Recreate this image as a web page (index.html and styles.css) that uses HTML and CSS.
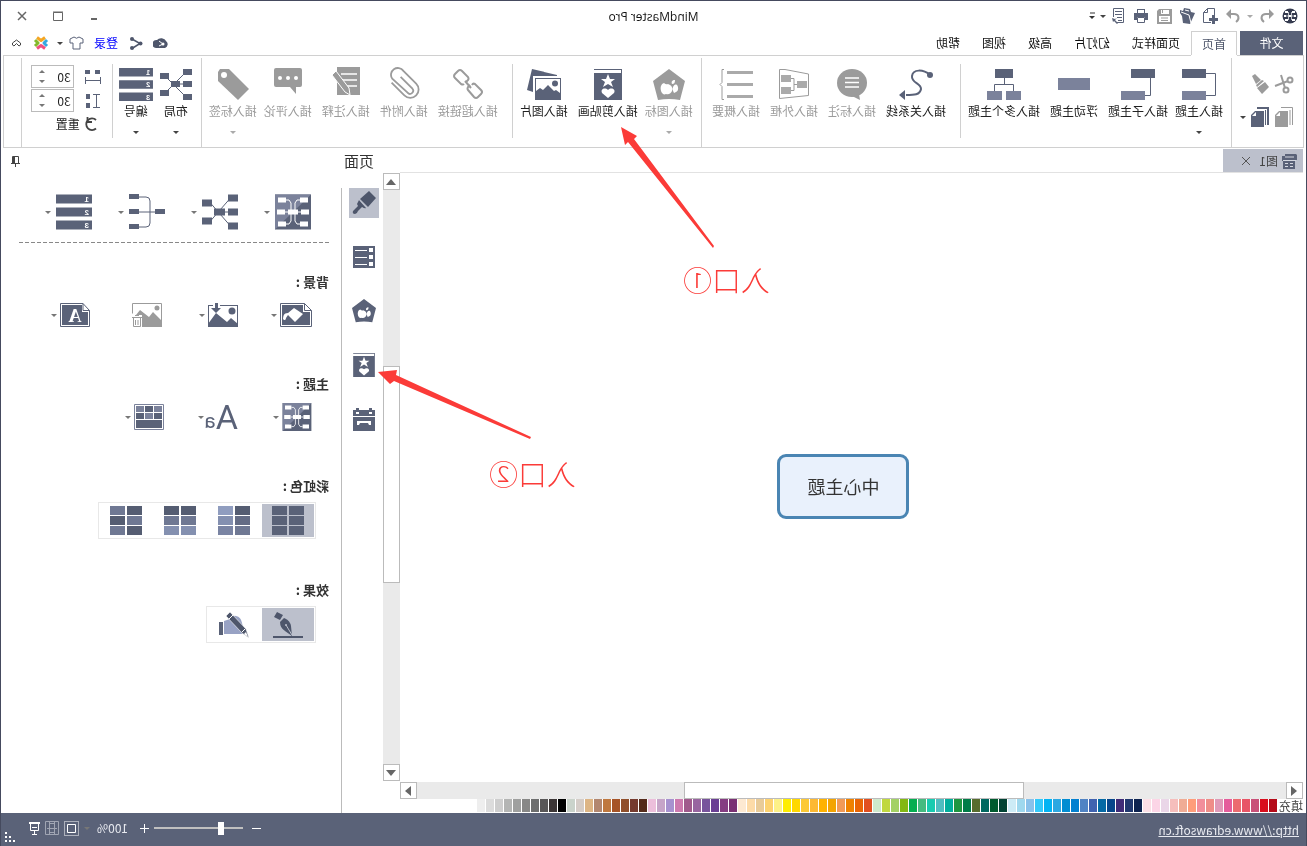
FILE: index.html
```html
<!DOCTYPE html>
<html lang="zh-CN">
<head>
<meta charset="utf-8">
<title>MindMaster Pro</title>
<link rel="stylesheet" href="styles.css">
</head>
<body>
<svg class="defs" aria-hidden="true">
  <defs>
    <symbol id="pentagon" viewBox="0 0 32 32">
      <path fill="currentColor" d="M16 0 32 12 27 31Q16 29 5 31L0 12Z"/>
      <path fill="#fff" d="M17 15q2 1 4-1c3 1 4 4 3 8-1 3-3 4-5 3-3 1-5-1-6-3s0-5 2-6ZM10 11c3 0 4 2 3 4-2 0-3-1-3-4ZM8 16c2-1 3 0 4 2s0 4-1 6l-2-1c-2-1-3-4-1-7Z"/>
    </symbol>
    <symbol id="card" viewBox="0 0 28 31">
      <path fill="currentColor" d="M0 0h28v1H1v3h27v27H0Z"/>
      <path fill="#fff" d="m14 5 2 5h5l-4 3 2 5-5-3-5 3 2-5-4-3h5ZM14 29l-6-5c-2-4 3-6 6-3 3-3 8-1 6 3Z"/>
    </symbol>
    <symbol id="map" viewBox="0 0 36 35">
      <path fill="#5a6278" d="M0 0h36v35H0Z"/>
      <path fill="#7b829b" d="M36 0v35L0 0Z"/>
      <path fill="#fff" d="M3 3h8v5H3ZM2 15h8v5H2ZM3 27h8v5H3ZM25 3h8v5h-8ZM26 15h8v5h-8ZM25 27h8v5h-8ZM13 15h10v5H13Z"/>
      <path fill="none" stroke="#fff" d="M11 5.500h3l2 3v18l-2 3h-3M25 5.500h-3l-2 3v18l2 3h3M10 17.500h16"/>
    </symbol>
    <symbol id="bars" viewBox="0 0 36 35">
      <path fill="#5a6278" d="M0 0h36v9H0ZM0 13h36v9H0ZM0 26h36v9H0Z"/>
      <g fill="#fff" font-size="8" font-weight="700" font-family="Liberation Sans, sans-serif"><text x="3" y="7.500">1</text><text x="3" y="20.500">2</text><text x="3" y="33.500">3</text></g>
    </symbol>
    <symbol id="spider" viewBox="0 0 36 35">
      <path stroke="#5a6278" d="m8 4 20 23M8 31 28 8M5 17.500h17"/>
      <path fill="#5a6278" d="M0 0h10v7H0ZM0 14h10v7H0ZM0 28h10v7H0ZM13 14h11v7H13ZM26 5h10v7H26ZM26 23h10v7H26Z"/>
    </symbol>
  </defs>
</svg>

<div class="window">
  <header class="titlebar">
    <div class="quick">
      <svg width="18" height="18" viewBox="0 0 18 18"><circle cx="9" cy="9" r="7.500" fill="#343a4e"/><path fill="#fff" d="M4 4h3v2H4ZM11 4h3v2h-3ZM3 8h2v2H3ZM13 8h2v2h-2ZM4 12h3v2H4ZM11 12h3v2h-3ZM8 8h2v2H8Z"/><path stroke="#fff" fill="none" stroke-width=".7" d="M7.500 5v8M10.500 5v8M5 9h8"/></svg>
      <button aria-label="撤销"><svg width="18" height="18" viewBox="0 0 18 18"><path fill="none" stroke="#9b9b9b" stroke-width="2" d="M4 7h6c5 0 6 5 2 8"/><path fill="#9b9b9b" d="m2 7 5-5v10Z"/></svg></button>
      <i class="caret pale"></i>
      <button aria-label="重做"><svg width="18" height="18" viewBox="0 0 18 18"><path fill="none" stroke="#9b9b9b" stroke-width="2" d="M14 7H8c-5 0-6 5-2 8"/><path fill="#9b9b9b" d="m16 7-5-5v10Z"/></svg></button>
      <button aria-label="新建"><svg width="18" height="18" viewBox="0 0 18 18"><path fill="none" stroke="#5a6278" d="M8 15.500h7.500V5.500l-4-4h-7V9M11.500 1.500v4h4"/><path fill="#5a6278" d="M4 8h3v3h3v3H7v3H4v-3H1v-3h3Z"/></svg></button>
      <button aria-label="打开"><svg width="18" height="18" viewBox="0 0 18 18"><path fill="#5a6278" d="m1 6 4-1 1-3 6-1 1 3 3-1v3l-2 3-1 7-7 1Z"/><path fill="none" stroke="#fff" d="m5 16 2-8 8-3M7 4l4-1"/></svg></button>
      <button aria-label="保存"><svg width="18" height="18" viewBox="0 0 18 18"><path fill="#9b9b9b" d="M1 2h13l2 2v13H1Z"/><path fill="#fff" d="M4 3h8v4H4ZM3 9h11v6H3Z"/><path stroke="#9b9b9b" d="M10.500 3v3M5 11h7M5 13.500h7"/></svg></button>
      <button aria-label="打印"><svg width="18" height="18" viewBox="0 0 18 18"><path fill="#5a6278" d="M2 6h14v7H2ZM5 2h8v4H5Z"/><path fill="#fff" d="M6 3h6v3H6ZM5 10h8v6H5Z"/><path fill="none" stroke="#5a6278" d="M5.500 10.500h7v5h-7Z"/></svg></button>
      <button aria-label="导出"><svg width="18" height="18" viewBox="0 0 18 18"><path fill="none" stroke="#5a6278" d="M10 15.500H3.500v-14h10V10M5 4.500h7M5 7.500h7M5 10.500h5M5 13.500h4"/><path fill="#5a6278" d="m10 11 2 1 3-1-1 4-1-1-3 3-1-1 3-3Z"/></svg></button>
      <i class="caret tight"></i>
      <svg width="6" height="8" viewBox="0 0 6 8"><path stroke="#333" d="M0 1h5"/><path d="M0 4h6L3 7Z" fill="#333"/></svg>
    </div>
    <h1>MindMaster Pro</h1>
    <div class="winbtns">
      <button aria-label="最小化"><svg width="10" height="10"><path stroke="#666" stroke-width="2" d="M2 8h6"/></svg></button>
      <button aria-label="最大化"><svg width="10" height="10"><path fill="none" stroke="#666" d="M.5 1.500h9v8h-9Z"/><path stroke="#666" d="M0 1h10"/></svg></button>
      <button aria-label="关闭"><svg width="10" height="10"><path stroke="#666" stroke-width="1.500" d="m1 1 8 8M9 1 1 9"/></svg></button>
    </div>
  </header>

  <nav class="tabs">
    <button class="file">文件</button>
    <button class="tab on">首页</button>
    <button class="tab">页面样式</button>
    <button class="tab">幻灯片</button>
    <button class="tab">高级</button>
    <button class="tab">视图</button>
    <button class="tab">帮助</button>
    <div class="account">
      <button aria-label="云"><svg width="16" height="12" viewBox="0 0 16 12"><path fill="#4e566b" d="M4 11a4 4 0 0 1-1-7 5 4 0 0 1 9-1 4 4 0 0 1 1 8Z"/><path fill="none" stroke="#fff" d="m10 4-4 3 4 2"/><circle cx="6" cy="7" r="1.500" fill="#fff"/></svg></button>
      <button aria-label="分享"><svg width="13" height="13" viewBox="0 0 13 13"><path fill="none" stroke="#4e566b" stroke-width="1.500" d="M11 2 3 6.500l8 5"/><g fill="#4e566b"><circle cx="11" cy="2" r="2"/><circle cx="2.500" cy="6.500" r="2"/><circle cx="11" cy="11" r="2"/></g></svg></button>
      <a href="#login">登录</a>
      <button aria-label="皮肤"><svg width="15" height="14" viewBox="0 0 15 14"><path fill="none" stroke="#5a6278" d="M5 1Q7.500 3.500 10 1l4 2v4h-3v6H4V7H1V3Z"/></svg></button>
      <i class="caret"></i>
      <button aria-label="应用"><svg width="16" height="16" viewBox="0 0 16 16"><g fill="none" stroke-width="3" stroke-linejoin="round"><path d="m4 2.500 4 3 4-3" stroke="#f5a623"/><path d="m4 13.500 4-3 4 3" stroke="#f0507e"/><path d="m2 5 3 3-3 3" stroke="#35a8e0"/><path d="m14 5-3 3 3 3" stroke="#84b92c"/></g></svg></button>
      <button class="fold" aria-label="折叠"><svg width="9" height="8" viewBox="0 0 9 8"><path fill="none" stroke="#444" d="m.5 4 4-3 4 3v2L7 7 4.500 4.500 2 7 .5 6Z"/></svg></button>
    </div>
  </nav>

  <section class="ribbon">
    <div class="clip">
      <button aria-label="剪切"><svg width="20" height="20" viewBox="0 0 20 20"><g fill="none" stroke="#9b9b9b" stroke-width="2"><circle cx="4" cy="6" r="2.500"/><circle cx="8" cy="16" r="2.500"/><path d="m6 7 13 5M9 14l4-13"/></g></svg></button>
      <button aria-label="格式刷"><svg width="20" height="20" viewBox="0 0 20 20"><path fill="#9b9b9b" d="m15 0 3 2-4 8-5-4ZM8 6l6 5-1 2-7-6ZM5 8l8 6-5 6-7-7Z"/></svg></button>
      <i></i>
      <button aria-label="复制"><svg width="20" height="20" viewBox="0 0 20 20"><path fill="#9b9b9b" d="M6 4h9l4 4v12H6Z"/><path fill="none" stroke="#9b9b9b" d="M1.500 18V.5H13M4 18V3"/><path fill="#fff" d="M14 5v4h4Z"/></svg></button>
      <button aria-label="粘贴"><svg width="20" height="20" viewBox="0 0 20 20"><path fill="#5a6278" d="M6 4h9l4 4v12H6ZM1 0h12v2H3v16H1ZM4 3h1v15H4Z"/><path fill="#fff" d="M14 5v4h4Z"/></svg></button>
      <i class="caret"></i>
    </div>
    <span class="sep"></span>

    <div class="group near">
      <button class="cmd drop"><svg width="34" height="34" viewBox="0 -2 34 34"><path fill="#5a6278" d="M10 0h24v9H10Z"/><path fill="#7b829b" d="M10 22h24v9H10Z"/><path fill="none" stroke="#5a6278" d="M10 4.500H.5v22H10"/></svg>插入主题<i class="caret"></i></button>
      <button class="cmd"><svg width="34" height="34" viewBox="0 -2 34 34"><path fill="#5a6278" d="M0 0h24v9H0Z"/><path fill="#7b829b" d="M10 22h24v9H10Z"/><path fill="none" stroke="#5a6278" d="M4.500 9v17.500H10"/></svg>插入子主题</button>
      <button class="cmd"><svg width="32" height="34" viewBox="0 -2 32 34"><path fill="#7b829b" d="M0 9h32v12H0Z"/></svg>浮动主题</button>
      <button class="cmd"><svg width="34" height="34" viewBox="0 -2 34 34"><path fill="#5a6278" d="M8 0h18v9H8Z"/><path fill="#7b829b" d="M0 22h15v9H0ZM19 22h15v9H19Z"/><path fill="none" stroke="#5a6278" d="M16.500 9v6M7.500 22v-6.500h19V22"/></svg>插入多个主题</button>
    </div>
    <span class="sep short"></span>
    <div class="group far">
      <button class="cmd"><svg width="34" height="34" viewBox="0 -2 34 34"><path fill="none" stroke="#5a6278" stroke-width="2" d="M3 6C10 0 20 0 21 7c1 7-9 7-9 13 1 6 7 6 15 6"/><circle cx="3" cy="6" r="3" fill="#5a6278"/><path fill="#5a6278" d="m28 21 6 5-6 5Z"/></svg>插入关系线</button>
      <button class="cmd off"><svg width="30" height="34" viewBox="0 -2 30 34"><ellipse cx="15" cy="14" rx="15" ry="14" fill="#9b9b9b"/><path fill="#9b9b9b" d="m8 25-1 6 8-4Z"/><path stroke="#fff" stroke-width="1.500" d="M8 9h14M8 13.500h14M8 18h14"/></svg>插入标注</button>
      <button class="cmd off"><svg width="30" height="34" viewBox="0 -2 30 34"><path fill="none" stroke="#9b9b9b" d="M.5 5 24 .5h5.500v29L.5 26.500ZM12 15.500h3M18 9.500h-3v12h3"/><path fill="#aaa" d="M2 12h10v7H2ZM18 6h10v7H18ZM18 18h10v7H18Z"/></svg>插入外框</button>
      <button class="cmd off"><svg width="34" height="34" viewBox="0 -2 34 34"><path fill="#aaa" d="M0 2h26v3H0ZM0 14h26v3H0ZM0 26h26v3H0Z"/><path fill="none" stroke="#9b9b9b" d="M29 .5h2v13l2 2-2 2v13h-2"/></svg>插入概要</button>
    </div>
    <span class="sep"></span>
    <div class="group near">
      <button class="cmd drop off"><svg class="dim" width="32" height="34"><use href="#pentagon" y="2" width="32" height="32"/></svg>插入图标<i class="caret pale"></i></button>
      <button class="cmd"><svg class="ink" width="28" height="34"><use href="#card" y="2" width="28" height="31"/></svg>插入剪贴画</button>
      <button class="cmd"><svg width="34" height="34" viewBox="0 -2 34 34"><path fill="#5a6278" d="m29 0 5 21-6 2V7H4V6Z"/><path fill="#5a6278" d="M0 9h26v22H0Z"/><path fill="#fff" d="M1 10h24v12l-4-3-3 2-5-5-6 6-2-1-4 3Z"/><circle cx="6" cy="14.500" r="3" fill="#5a6278"/></svg>插入图片</button>
    </div>
    <span class="sep short"></span>
    <div class="group far">
      <button class="cmd off"><svg width="30" height="34" viewBox="0 -2 30 34"><g fill="none" stroke="#9b9b9b" stroke-width="2"><path d="m17 13-2-2q-1-1 0-3l6-6q2-2 4 0l3 3q2 2 0 4l-6 6q-2 1-3 0M13 16l2 2q1 2 0 3l-6 7q-2 2-4 0l-3-3q-2-2 0-4l6-6q2-1 3 1"/><path d="m12 19 6-7"/></g></svg>插入超链接</button>
      <button class="cmd off"><svg width="32" height="34" viewBox="1 0 23 24"><path fill="none" stroke="#9b9b9b" stroke-width="1.300" d="m21.440 11.050-9.190 9.190a6 6 0 0 1-8.490-8.490l9.190-9.190a4 4 0 0 1 8 5.660l-11 10a2 2 0 0 1-3.500-2.830l8.490-8.480"/></svg>插入附件</button>
      <button class="cmd off"><svg width="28" height="34" viewBox="0 0 28 34"><path fill="#9b9b9b" d="M0 0h23v28H0Z"/><path stroke="#fff" stroke-width="1.500" d="M3 7h16M3 13h16M3 19h12"/><path fill="#9b9b9b" stroke="#fff" d="m24 4 4 4-13 17-5 3 1-7Z"/></svg>插入注释</button>
      <button class="cmd off"><svg width="28" height="34" viewBox="0 0 28 34"><path fill="#9b9b9b" d="M2 1h24q2 0 2 2v15q0 2-2 2H12l-6 7v-7H2q-2 0-2-2V3q0-2 2-2Z"/><g fill="#fff"><circle cx="6" cy="11" r="2"/><circle cx="14" cy="11" r="2"/><circle cx="22" cy="11" r="2"/></g></svg>插入评论</button>
      <button class="cmd drop off"><svg width="32" height="34" viewBox="0 -2 32 34"><path fill="#9b9b9b" d="M20 0h9l2 3v9L11 31 0 20Z"/><circle cx="25" cy="6" r="3" fill="#fff"/></svg>插入标签<i class="caret pale"></i></button>
    </div>
    <span class="sep"></span>
    <div class="group arrange">
      <button class="cmd drop"><svg width="32" height="34" viewBox="0 -2 32 34"><path stroke="#5a6278" d="m6 3 22 22M6 28 28 6M6 15h9"/><path fill="#5a6278" d="M0 0h9v6H0ZM0 12h9v6H0ZM0 25h9v6H0ZM12 12h9v6h-9ZM23 4h9v6h-9ZM23 21h9v6h-9Z"/></svg>布局<i class="caret"></i></button>
      <button class="cmd drop"><svg width="34" height="34"><use href="#bars" y="1" width="34" height="33"/></svg>编号<i class="caret"></i></button>
    </div>
    <span class="sep short"></span>
    <div class="spacing">
      <label class="spin"><svg width="18" height="18" viewBox="0 0 18 18"><path fill="#5a6278" d="M2 2h5v4H2ZM12 2h5v4h-5Z"/><path fill="none" stroke="#5a6278" d="M1.500 9v7M16.500 9v7M2 12.500h15"/></svg>
        <span class="box"><input type="text" value="30" aria-label="水平间距"><span class="arrows"><i class="caret up"></i><i class="caret mid"></i></span></span></label>
      <label class="spin"><svg width="18" height="18" viewBox="0 0 18 18"><path fill="#5a6278" d="M12 2h4v5h-4ZM12 11h4v5h-4Z"/><path fill="none" stroke="#5a6278" d="M2 2.500h7M2 15.500h7M5.500 3v13"/></svg>
        <span class="box"><input type="text" value="30" aria-label="垂直间距"><span class="arrows"><i class="caret up"></i><i class="caret mid"></i></span></span></label>
      <button class="reset"><svg width="16" height="16" viewBox="0 0 16 16"><path fill="none" stroke="#444" stroke-width="1.800" d="M4 12.500A5.800 5.800 0 1 0 4 4"/><path fill="none" stroke="#444" stroke-width="1.800" d="M12.500 1v5H8"/></svg>重置</button>
    </div>
    <span class="sep"></span>
  </section>

  <main class="work">
    <div class="editor">
      <div class="doctabs">
        <div class="doc"><svg width="16" height="18" viewBox="0 0 16 18"><path fill="#5a6278" d="M1 2h11v2h3v5h-1v8H2V8H0V3Z"/><path fill="none" stroke="#d5d8e0" d="M3 5h9M1 8.500h13M4 11.500h3M9 11.500h3M4 14.500h3M9 14.500h3"/></svg><span>图1</span><button aria-label="关闭图1"><svg width="8" height="8"><path stroke="#555" d="m0 0 8 8M8 0 0 8"/></svg></button></div>
      </div>
      <div class="canvas"><div class="topic">中心主题</div></div>
      <div class="hbar"><button aria-label="向左"><svg width="6" height="10"><path fill="#666" d="M6 0v10L0 5Z"/></svg></button><span class="track"><span class="thumb"></span></span><button aria-label="向右"><svg width="6" height="10"><path fill="#666" d="M0 0v10l6-5Z"/></svg></button></div>
      <div class="palette" id="palette"><span>填充</span></div>
    </div>
    <div class="vbar"><button aria-label="向上"><svg width="10" height="6"><path fill="#666" d="M0 6h10L5 0Z"/></svg></button><span class="track"><span class="thumb"></span></span><button aria-label="向下"><svg width="10" height="6"><path fill="#666" d="M0 0h10L5 6Z"/></svg></button></div>

    <aside class="panel">
      <div class="paneltitle"><h2>页面</h2><button aria-label="固定"><svg width="9" height="11" viewBox="0 0 9 11"><path fill="none" stroke="#444" d="M1.500 7V.5h6V7M0 7.500h9M4.500 8v3"/><path fill="#444" d="M5 1h2v6H5Z"/></svg></button></div>
      <div class="panelbody">
        <div class="rail">
          <button class="on" aria-label="页面格式"><svg width="24" height="24" viewBox="0 0 24 24"><path fill="#4e566b" d="m7 0 9 8-8 8-8-9ZM17 9l2 4-1 2 5 5q1 3-2 3-2 0-3-3l-4-4q-3 2-4 1Z"/><path stroke="#bcc0cc" d="m17 8-8 9"/></svg></button>
          <button aria-label="列表"><svg width="22" height="22" viewBox="0 0 22 22"><path fill="#5a6278" d="M0 0h22v22H0Z"/><path fill="#fff" d="M2 2h4v4H2ZM2 9h4v4H2ZM2 16h4v4H2ZM8 4h12v1H8ZM8 11h12v1H8ZM8 18h12v1H8Z"/></svg></button>
          <button class="ink" aria-label="图标"><svg width="24" height="24"><use href="#pentagon" width="24" height="24"/></svg></button>
          <button class="ink" aria-label="剪贴画"><svg width="22" height="24"><use href="#card" width="22" height="24"/></svg></button>
          <button aria-label="任务"><svg width="22" height="23" viewBox="0 0 22 23"><path fill="#5a6278" d="M0 2h3V0h3v2h10V0h3v2h3v6H0ZM0 9h22v14H0Z"/><path fill="#fff" d="M3 4h3v2H3ZM16 4h3v2h-3ZM4 13h14v4h-2l-1-2H7l-1 2H4Z"/></svg></button>
        </div>
        <div class="props">
          <div class="layouts">
            <button aria-label="导图"><svg width="36" height="36"><use href="#map" width="36" height="36"/></svg><i class="caret mid"></i></button>
            <button aria-label="布局"><svg width="36" height="36"><use href="#spider" width="36" height="36"/></svg><i class="caret mid"></i></button>
            <button aria-label="连线"><svg width="36" height="36" viewBox="0 0 36 36"><path fill="none" stroke="#5a6278" d="M26 3h-7q-4 0-4 4v22q0 4 4 4h7M10 18h16"/><path fill="#5a6278" d="M0 15h10v5H0ZM26 0h10v5H26ZM26 15h10v5H26ZM26 30h10v5H26Z"/></svg><i class="caret mid"></i></button>
            <button aria-label="编号"><svg width="36" height="36"><use href="#bars" width="36" height="36"/></svg><i class="caret mid"></i></button>
          </div>
          <h3>背景 :</h3>
          <div class="tools">
            <button aria-label="填充背景"><svg width="32" height="24" viewBox="0 0 32 24"><path fill="none" stroke="#5a6278" d="M.5 7.500 7.500.5h24v23H.5ZM7.500.5v7h-7"/><path fill="#5a6278" d="M9 2h21v20H2V9h7Z"/><path fill="#fff" d="m9 11 9-6 6 5c4 0 5 3 5 6-1 2-3 1-3-1l-2-3-7 7Z"/></svg><i class="caret mid"></i></button>
            <button aria-label="背景图片"><svg width="30" height="24" viewBox="0 0 30 24"><path fill="none" stroke="#5a6278" d="M.5 3v20.500h29V3M0 2.500h18M25 2.500h5"/><path fill="#5a6278" d="m0 24 0-3 7-6 4 4 11-9 8 11v3ZM20 0h3v5h4l-5 5-5-5h3Z"/><circle cx="6" cy="8" r="3.500" fill="#5a6278"/></svg><i class="caret mid"></i></button>
            <button aria-label="移除背景"><svg width="32" height="24" viewBox="-2 0 32 24"><path fill="none" stroke="#9b9b9b" d="M.5.5h29v10M.5.500V23"/><path fill="#9b9b9b" d="m0 24 0-6 9-9 4 5 9-7 4 5h-6v12Z"/><circle cx="5" cy="5" r="2.500" fill="#9b9b9b"/><path fill="none" stroke="#9b9b9b" d="M20 14.500h10M23 12.500h4M21.500 15v8.500h7V15M24 17v5M26.500 17v5"/></svg></button>
            <button aria-label="水印"><svg width="30" height="24" viewBox="0 0 30 24"><path fill="none" stroke="#5a6278" d="M.5 7.500 7 .5h22.500v23H.5ZM7 .5v7H.5"/><path fill="#5a6278" d="M8 2h20v20H2V9h6Z"/><text x="15" y="19" fill="#fff" text-anchor="middle" font-family="Liberation Serif, serif" font-weight="700" font-size="18">A</text></svg><i class="caret mid"></i></button>
          </div>
          <h3>主题 :</h3>
          <div class="tools tall">
            <button aria-label="主题"><svg width="30" height="28"><use href="#map" width="30" height="28"/></svg><i class="caret mid"></i></button>
            <button class="fonts" aria-label="主题字体"><span class="big">A</span><span class="small">a</span><i class="caret mid"></i></button>
            <button aria-label="主题颜色"><svg width="30" height="26" viewBox="0 0 30 26"><path fill="none" stroke="#7b829b" d="M.5.500h29v25H.5Z"/><path fill="#5a6278" d="M11 2h8v6h-8ZM2 9h8v6H2ZM20 9h8v6h-8ZM2 16h26v8H2Z"/><path fill="#7b829b" d="M2 2h8v6H2ZM20 2h8v6h-8ZM11 9h8v6h-8Z"/></svg><i class="caret mid"></i></button>
          </div>
          <h3>彩虹色 :</h3>
          <div class="choices">
            <button class="on" aria-label="单色"><svg width="32" height="29"><path fill="#5a6278" d="M0 0h15v9H0ZM17 0h15v9H17ZM0 10h15v9H0ZM17 10h15v9H17ZM0 20h15v9H0ZM17 20h15v9H17Z"/></svg></button>
            <button aria-label="双列"><svg width="32" height="29"><path fill="#555d72" d="M0 0h15v9H0Z"/><path fill="#646c85" d="M0 10h15v9H0Z"/><path fill="#6f7893" d="M0 20h15v9H0Z"/><path fill="#909dbf" d="M17 0h15v9H17Z"/><path fill="#8490b0" d="M17 10h15v9H17Z"/><path fill="#7a84a3" d="M17 20h15v9H17Z"/></svg></button>
            <button aria-label="渐变"><svg width="32" height="29"><path fill="#555d72" d="M0 0h15v9H0ZM17 0h15v9H17Z"/><path fill="#6f7893" d="M0 10h15v9H0ZM17 10h15v9H17Z"/><path fill="#8490b0" d="M0 20h15v9H0ZM17 20h15v9H17Z"/></svg></button>
            <button aria-label="交错"><svg width="32" height="29"><path fill="#555d72" d="M0 0h15v9H0ZM17 10h15v9H17ZM0 20h15v9H0Z"/><path fill="#6f7893" d="M17 0h15v9H17ZM0 10h15v9H0ZM17 20h15v9H17Z"/></svg></button>
          </div>
          <h3>效果 :</h3>
          <div class="choices">
            <button class="on" aria-label="钢笔"><svg width="32" height="26" viewBox="0 0 32 26"><path fill="#4e566b" d="m21 3 6-3 3 5-6 3ZM20 6l4 4q0 6-5 9l-7 5 1-10q1-6 7-8ZM1 24h30v2H1Z"/><path stroke="#bcc0cc" d="m12 23 6-10"/><circle cx="18" cy="13" r="1" fill="#bcc0cc"/></svg></button>
            <button aria-label="手绘"><svg width="32" height="26" viewBox="0 0 32 26"><path fill="#98a2c4" d="M26 9v13H9q-4 0-3-3l2-8q1-6 6-7 3-1 6 3Z"/><path fill="#5a6278" d="M27 10h4v13h-4Z"/><path fill="#4e566b" stroke="#fff" stroke-width=".6" d="m20 0 4 4L8 21l-7 5 3-9Z"/><path stroke="#fff" d="m5 17 3 3M17 3l4 4"/><path fill="#fff" d="m2 25 2-5 2 2Z"/></svg></button>
          </div>
        </div>
      </div>
    </aside>
  </main>

  <footer class="status">
    <a href="http://www.edrawsoft.cn">http://www.edrawsoft.cn</a>
    <div class="zoom">
      <button aria-label="缩小"><svg width="9" height="9"><path stroke="#fff" d="M0 4.500h9"/></svg></button>
      <input type="range" min="0" max="100" value="23" aria-label="缩放">
      <button aria-label="放大"><svg width="9" height="9"><path stroke="#fff" d="M0 4.500h9M4.500 0v9"/></svg></button>
      <span class="pct">100%</span>
      <i class="caret mid"></i>
      <button aria-label="适合页面"><svg width="15" height="15"><path fill="none" stroke="#fff" stroke-dasharray="1 1" d="M.5.500h14v14H.5Z"/><path fill="none" stroke="#fff" d="M3.500 3.500h8v8h-8Z"/></svg></button>
      <button aria-label="适合宽度"><svg width="14" height="14"><path fill="none" stroke="#a0a5b3" d="M.5.500h13v13H.5ZM4.500 1v12M9.500 1v12M2 7.500h10M4 2.500h6M4 11.500h6"/></svg></button>
      <button aria-label="演示"><svg width="11" height="13"><path fill="none" stroke="#fff" d="M1.500 1v7.500h8V1M3 5.500h5M5.500 9v3M3 12.500h5"/><path fill="#fff" d="M0 0h11v2H0Z"/></svg></button>
      <svg class="grip" width="11" height="11"><path fill="#fff" d="M8 0h2v2H8ZM4 4h2v2H4ZM8 4h2v2H8ZM0 8h2v2H0ZM4 8h2v2H4ZM8 8h2v2H8Z"/></svg>
    </div>
  </footer>

  <svg class="note arrow1" width="95" height="123" viewBox="0 0 95 123"><path fill="#fb3b38" d="M94 1 90 19 87 16 2 122 1 120 81 13 78 10Z"/></svg>
  <p class="note text1">入口①</p>
  <svg class="note arrow2" width="155" height="74" viewBox="0 0 155 74"><path fill="#fb3b38" d="M154 6 142 18 138 15 2 73 1 71 136 9 135 4Z"/></svg>
  <p class="note text2">入口②</p>
</div>
<script src="script.js"></script>
</body>
</html>
```
FILE: styles.css
```css
* { box-sizing: border-box; }
body { margin: 0; background: #fff; color: #222; font: 12px/16px "Noto Sans CJK SC", sans-serif; }
button { border: 0; background: none; padding: 0; margin: 0; font: inherit; color: inherit; display: flex; align-items: center; justify-content: center; }
svg { display: block; flex: none; }
h1, h2, h3, p { margin: 0; font-weight: 400; }
.defs { position: absolute; width: 0; height: 0; }

/* the whole interface is shown flipped left to right */
.window { position: relative; display: flex; flex-direction: column; min-height: 100vh; border: 1px solid #454a5e; border-bottom: 0; transform: scaleX(-1); }

.caret { width: 0; height: 0; border: 3px solid transparent; border-top-color: #444; border-bottom: 0; flex: none; }
.caret.up { border-top: 0; border-bottom: 3px solid #777; }
.caret.pale { border-top-color: #aaa; }
.caret.mid { border-top-color: #777; }
.ink { color: #5a6278; }
.dim { color: #9b9b9b; }

.titlebar { display: grid; grid-template-columns: 1fr auto 1fr; align-items: center; height: 30px; }
.quick { display: flex; align-items: center; gap: 5px; padding-left: 7px; }
.quick .tight { margin-left: -2px; }
h1 { font: 12px/16px "Open Sans", sans-serif; color: #111; padding: 2px 0 0; }
.winbtns { display: flex; justify-content: flex-end; gap: 26px; padding-right: 16px; }

.tabs { display: flex; height: 24px; padding-left: 3px; color: #111; }
.file { width: 63px; margin-right: 3px; background: #5a6278; color: #fff; }
.tab { padding: 0 11px; }
.tab.on { position: relative; padding: 0 10px; border: 1px solid #d0d0d0; border-bottom: 0; background: #fff; color: #4e566b; box-shadow: 0 1px #fff; z-index: 1; }
.account { display: flex; align-items: center; gap: 10px; margin-left: auto; padding-right: 11px; }
.account a { color: #00f; text-decoration: none; margin-left: 2px; }
.account .caret { margin: 0 -2px 0 -4px; }
.fold { margin-left: 2px; }

.ribbon { display: flex; min-height: 93px; margin: 0 2px; border: 1px solid #d0d0d0; }
.sep { width: 1px; flex: none; margin-top: 2px; background: #d0d0d0; }
.sep.short { margin: 8px 0 9px; }
.clip { display: grid; grid-template-columns: 20px 20px 6px; grid-template-rows: 20px 20px; align-items: center; gap: 13px 4px; padding: 18px 8px 0 9px; }
.group { display: flex; }
.near { padding: 0 2px 0 6px; }
.far { padding: 0 5px 0 9px; }
.arrange { gap: 3px; padding: 0 4px 0 7px; }
.cmd { flex-direction: column; justify-content: flex-start; padding: 11px 5px 0; white-space: nowrap; }
.cmd.drop { padding: 11px 2px 0; }
.cmd svg { margin-bottom: 2px; }
.cmd .caret { margin-top: 12px; }
.off { color: #9b9b9b; }
.spacing { display: flex; flex-direction: column; gap: 1px; padding: 9px 9px 0 10px; }
.spin { display: flex; align-items: center; gap: 10px; }
.box { display: flex; width: 43px; height: 23px; border: 1px solid #bbb; }
.box input { width: 28px; border: 0; padding: 0 2px; font: inherit; color: #222; background: none; outline: 0; }
.arrows { display: flex; flex-direction: column; justify-content: center; gap: 7px; }
.reset { gap: 4px; align-self: flex-start; margin-top: 3px; padding-left: 2px; }

.work { display: flex; flex: 1; }
.editor { display: flex; flex-direction: column; flex: 1; min-width: 0; padding-left: 3px; }
.doctabs { height: 25px; padding-top: 1px; border-bottom: 1px solid #e2e2e2; }
.doc { display: flex; align-items: center; width: 80px; height: 23px; gap: 3px; padding-left: 6px; background: #bcc0cc; color: #444; }
.doc button { margin-left: 6px; }
.canvas { display: grid; flex: 1; place-items: center; padding: 17px 0 0 16px; }
.topic { padding: 17px 27px; border: 3px solid #4a85b3; border-radius: 9px; background: #e9f1fc; color: #333; font-size: 18px; line-height: 25px; }
.hbar { display: flex; height: 17px; }
.hbar button, .vbar button { width: 17px; height: 17px; border: 1px solid #bbb; background: #fff; flex: none; }
.track { display: flex; flex: 1; background: #eaeaea; }
.thumb { border: 1px solid #bbb; background: #fff; }
.hbar .track { padding-left: 29%; }
.hbar .thumb { width: 56%; }
.palette { display: flex; gap: 1px; height: 14px; color: #444; }
.palette span { line-height: 14px; margin-right: 1px; }
.swatch { width: 8px; height: 13px; }
.vbar { display: flex; flex-direction: column; width: 17px; margin: 25px 0 32px; }
.vbar .track { padding-top: 176px; }
.vbar .thumb { width: 100%; height: 217px; }

.panel { display: flex; flex-direction: column; width: 382px; }
.paneltitle { display: flex; align-items: center; justify-content: space-between; height: 40px; padding: 0 10px 14px 9px; }
h2 { font-size: 15px; color: #333; }
.panelbody { display: flex; flex: 1; }
.rail { display: flex; flex: none; flex-direction: column; gap: 24px; width: 41px; padding-left: 4px; }
.rail button { width: 30px; height: 30px; }
.rail .on, .choices .on { background: #bcc0cc; }
.props { flex: 1; min-width: 0; padding: 6px 18px 0 12px; border-left: 1px solid #bbb; }
.layouts { display: grid; grid-template-columns: repeat(4, 73px); height: 49px; padding-left: 18px; background: repeating-linear-gradient(90deg, #888 0 4px, transparent 4px 6px) bottom / 100% 1px no-repeat; }
.layouts button, .tools button { justify-content: flex-start; gap: 5px; }
.layouts button { height: 36px; }
h3 { margin-top: 30px; font-size: 13px; line-height: 18px; font-weight: 700; color: #333; }
.tools { display: grid; grid-template-columns: repeat(4, 74px); height: 26px; margin: 11px 0 0 17px; align-items: center; }
.tools button { gap: 3px; }
.tools + h3 { margin-top: 47px; }
.tools.tall { height: 28px; margin-top: 10px; }
.tools.tall + h3 { margin-top: 46px; }
.fonts { height: 28px; color: #5a6278; font-family: Roboto, sans-serif; }
.tools .fonts { gap: 0; }
.big { font-size: 34px; line-height: 28px; }
.small { font-size: 21px; line-height: 20px; align-self: flex-end; }
.choices { display: inline-flex; gap: 2px; margin: 7px 0 0 13px; padding: 1px; border: 1px solid #e8e8e8; vertical-align: top; }
.choices button { width: 52px; height: 33px; }
.choices + h3 { margin-top: 42px; }

.status { display: flex; align-items: center; justify-content: space-between; height: 33px; padding: 0 3px 0 7px; background: #5a6278; color: #e8eaf0; }
.status a { color: inherit; }
.zoom { display: flex; align-items: center; gap: 5px; height: 100%; padding-bottom: 3px; }
.zoom input { appearance: none; width: 89px; height: 13px; margin: 0 0 0 4px; background: linear-gradient(#c0c0c0, #c0c0c0) center / 100% 2px no-repeat; }
.zoom input::-webkit-slider-thumb { appearance: none; width: 6px; height: 13px; background: #fff; }
.pct { margin: 0 2px 0 7px; }
.grip { align-self: flex-end; margin-left: 9px; }

.note { position: absolute; pointer-events: none; color: #fb3b38; font-size: 29px; font-weight: 300; line-height: 36px; white-space: nowrap; }
.arrow1 { left: 591px; top: 125px; }
.arrow2 { left: 774px; top: 365px; }
.text1 { left: 536px; top: 260px; }
.text2 { left: 730px; top: 454px; }
```
FILE: script.js
```javascript
const colors = `b40a18 d90d1c c95078 e85566 ec6b70 e55d9b e09ab8 ef8d88 f28e9b ff9d7a f0ac95 f6bebc ead6e8 fcd5e6 fcdfe6
0e2350 21386f 402c78 07468b 0469a5 4062b0 5083c4 0280d0 028dd2 2ca8e2 02b3f3 34c9fa 8ac1ea 9fd8ee cdebf6
004233 005a2e 006860 586d2e 007c48 1e9641 02ae9d 50bdc0 18cbb0 45bb80 04ae50 83b813 a3d165 c0d840 cee8cc
e24f20 ea6505 ef8200 f19a58 f3a402 ffb200 fdb933 fcc935 ffd800 feed00 fdf187 fdd270 e9cb98 fddba8 fde9d2
7a3073 853c82 6a3f94 78549c 9865a0 a05a8c cd7aaf a792cf c6a5c8 ecbfdb
542b1b 753a2e 904f2b a65427 bf783f b28770 ddb585 d5cdc8 cad3cb
000000 3b3535 585657 6d6e6e 888887 9fa09f b4b5b4 cecece dcdcdc eeeeee`.split(/\s+/);
const palette = document.getElementById("palette");
for (const c of colors) {
  const b = document.createElement("button");
  b.className = "swatch";
  b.style.background = "#" + c;
  b.setAttribute("aria-label", "#" + c);
  palette.append(b);
}
```
